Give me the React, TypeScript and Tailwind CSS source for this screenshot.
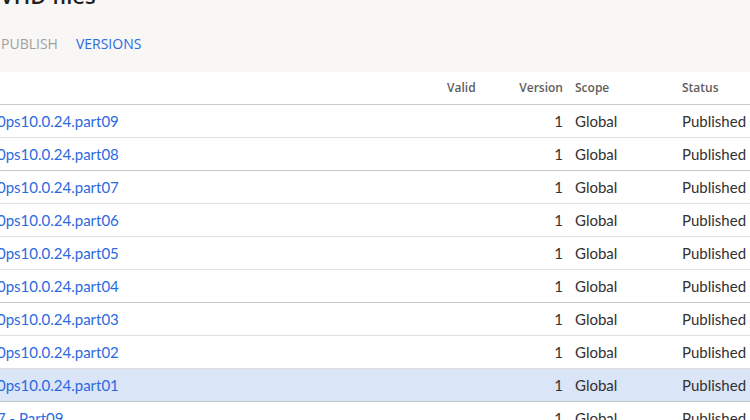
import React from 'react';

type VersionRow = {
  name: string;
  version: number;
  scope: string;
  status: string;
  selected?: boolean;
  darkBorder?: boolean;
};

const rows: VersionRow[] = [
  { name: '0ps10.0.24.part09', version: 1, scope: 'Global', status: 'Published' },
  { name: '0ps10.0.24.part08', version: 1, scope: 'Global', status: 'Published', darkBorder: true },
  { name: '0ps10.0.24.part07', version: 1, scope: 'Global', status: 'Published' },
  { name: '0ps10.0.24.part06', version: 1, scope: 'Global', status: 'Published' },
  { name: '0ps10.0.24.part05', version: 1, scope: 'Global', status: 'Published' },
  { name: '0ps10.0.24.part04', version: 1, scope: 'Global', status: 'Published', darkBorder: true },
  { name: '0ps10.0.24.part03', version: 1, scope: 'Global', status: 'Published' },
  { name: '0ps10.0.24.part02', version: 1, scope: 'Global', status: 'Published' },
  { name: '0ps10.0.24.part01', version: 1, scope: 'Global', status: 'Published', selected: true },
  { name: '7 - Part09', version: 1, scope: 'Global', status: 'Published' },
];

const cols = 'grid grid-cols-[447px_60px_57px_118px_1fr] items-center';

export default function App() {
  return (
    <div className="h-[420px] w-[750px] overflow-hidden bg-white font-['Lato',sans-serif] text-[#323130]">
      {/* Header area */}
      <div className="flex h-[72px] flex-col bg-[#f8f7f6] font-['Open_Sans',sans-serif]">
        <div className="-mt-[19px] whitespace-nowrap text-[22px] font-semibold leading-[28px] text-[#201f1e]">
          VHD files
        </div>
        <div className="mt-[25px] flex gap-[18px] text-[14px] leading-[20px]">
          <span className="ml-[1px] text-[#a19f9d]">PUBLISH</span>
          <span className="text-[#2b6ae0]">VERSIONS</span>
        </div>
      </div>

      {/* Table header */}
      <div
        className={`${cols} h-[33px] border-b border-[#cfcdcb] font-['Open_Sans',sans-serif] text-[12px] font-semibold text-[#605e5c]`}
      >
        <div />
        <div>Valid</div>
        <div className="pr-[1px] text-right">Version</div>
        <div className="pl-[11px]">Scope</div>
        <div>Status</div>
      </div>

      {/* Rows */}
      {rows.map((row) => (
        <div
          key={row.name}
          className={`${cols} h-[33px] border-b text-[15px] ${
            row.darkBorder || row.selected ? 'border-[#c8c6c4]' : 'border-[#e1dfdd]'
          } ${row.selected ? 'bg-[#dae5f8]' : ''}`}
        >
          <div className="-ml-[3px] whitespace-nowrap text-[#2b6ae0]">{row.name}</div>
          <div />
          <div className="pr-[1px] text-right">{row.version}</div>
          <div className="pl-[11px]">{row.scope}</div>
          <div className="whitespace-nowrap">{row.status}</div>
        </div>
      ))}
    </div>
  );
}
